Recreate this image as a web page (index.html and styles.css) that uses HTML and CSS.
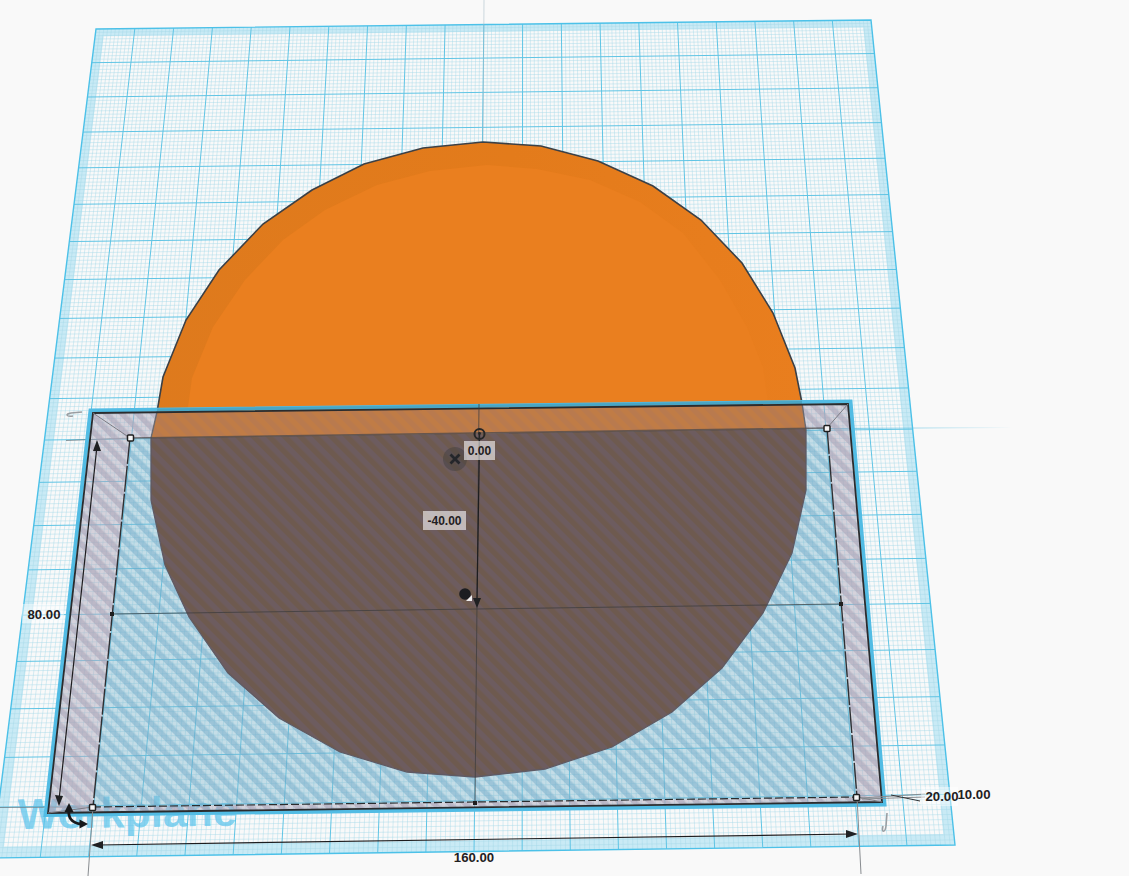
FILE: index.html
```html
<!DOCTYPE html>
<html lang="en">
<head>
<meta charset="utf-8">
<title>Workplane</title>
<link rel="stylesheet" href="styles.css">
</head>
<body>
<main class="viewport">
<svg class="scene" viewBox="0 0 1129 876" width="1129" height="876" xmlns="http://www.w3.org/2000/svg">
  <defs>
    <pattern id="hatch-wall" width="11" height="11" patternUnits="userSpaceOnUse" patternTransform="rotate(-45)">
      <rect class="hw-a" width="11" height="11"/><rect class="hw-b" width="5.5" height="11"/>
    </pattern>
    <pattern id="hatch-floor" width="11" height="11" patternUnits="userSpaceOnUse" patternTransform="rotate(-45)">
      <rect class="hf-a" width="11" height="11"/><rect class="hf-b" width="5.5" height="11"/>
    </pattern>
    <pattern id="hatch-orange" width="11" height="11" patternUnits="userSpaceOnUse" patternTransform="rotate(-45)">
      <rect class="ho-a" width="11" height="11"/><rect class="ho-b" width="5.5" height="11"/>
    </pattern>
    <pattern id="hatch-brown" width="11" height="11" patternUnits="userSpaceOnUse" patternTransform="rotate(-45)">
      <rect class="hb-a" width="11" height="11"/><rect class="hb-b" width="5.5" height="11"/>
    </pattern>
    <linearGradient id="rim" x1="0" x2="1" y1="0" y2="0">
      <stop offset="0" class="rim-l"/><stop offset="0.55" class="rim-m"/><stop offset="1" class="rim-r"/>
    </linearGradient>
    <linearGradient id="fade-right" gradientUnits="userSpaceOnUse" x1="827" y1="0" x2="1012" y2="0">
      <stop offset="0" class="fade-a"/><stop offset="1" class="fade-b"/>
    </linearGradient>
    <polygon id="disc" points="483,142 541,146 598,161 653,186 701,220 742,263 773,313 795,368 802,403 806,430 806,490 792,553 763,613 722,668 672,712 612,747 545,769 475,777 407,772 340,752 279,718 228,673 189,617 165,565 151,500 151,438 157,412 163,377 186,320 219,270 263,224 312,190 364,164 423,148"/>
    <clipPath id="clip-above"><polygon points="0,414 1129,400.6 1129,0 0,0"/></clipPath>
    <clipPath id="clip-wall"><polygon points="0,414 1129,400.6 1129,424 0,440.2"/></clipPath>
    <clipPath id="clip-upper"><polygon points="0,440.2 1129,424 1129,0 0,0"/></clipPath>
    <clipPath id="clip-floor"><polygon points="0,440.2 1129,424 1129,876 0,876"/></clipPath>
  </defs>

  <!-- workplane -->
  <path id="wp-band" class="wp-band"/>
  <path id="wp-minor" class="wp-minor"/>
  <path id="wp-major" class="wp-major"/>
  <polygon class="wp-edge" points="96,29 871,20 955,845 -8,858"/>
  <text class="wp-title" x="18" y="829" transform="rotate(-0.9 18 829)">Workplane</text>

  <!-- faint centre axis -->
  <line class="axis-faint" x1="484" y1="0" x2="483" y2="142"/>
  <line class="axis-blue" x1="827" y1="428.5" x2="1012" y2="427.5"/>
  <line class="axis-grey" x1="66" y1="440.5" x2="130" y2="438"/>
  <line class="axis-grey" x1="0" y1="807.5" x2="93" y2="807"/>

  <!-- hole box, walls and floor -->
  <path class="box-wall" fill-rule="evenodd" d="M93 413 848 404 882 802 48 813Z M130 438 827 428 857 797 93 807Z"/>
  <polygon class="box-floor" points="130,438 827,428 857,797 93,807"/>

  <!-- half disc -->
  <g clip-path="url(#clip-upper)">
    <use href="#disc" class="disc-rim"/>
    <polygon class="disc-top" points="187,414 192,378 213,327 245,280 283,240 325,210 377,185 430,171 487,165 537,169 590,180 640,202 683,233 720,280 747,327 763,367 768,402 770,432 187,440"/>
  </g>
  <use href="#disc" class="disc-hatch-orange" clip-path="url(#clip-wall)"/>
  <use href="#disc" class="disc-brown" clip-path="url(#clip-floor)"/>
  <use href="#disc" class="disc-line" clip-path="url(#clip-above)"/>
  <use href="#disc" class="disc-line-wall" clip-path="url(#clip-wall)"/>
  <use href="#disc" class="disc-line-floor" clip-path="url(#clip-floor)"/>

  <!-- selection outline -->
  <polygon class="sel-blue" points="90.5,410.5 850.5,401.5 884.5,804.5 45.5,815"/>
  <line class="sel-teal" x1="157" y1="410" x2="802" y2="402.4"/>
  <polygon class="sel-black" points="93,413 848,404 882,802 48,813"/>

  <!-- bounding frame -->
  <line class="frame-top" x1="130" y1="438" x2="827" y2="428"/>
  <line class="frame-side" x1="130" y1="438" x2="93" y2="807"/>
  <line class="frame-side" x1="827" y1="428" x2="857" y2="797"/>
  <line class="frame-dash" x1="93" y1="807" x2="857" y2="797"/>
  <line class="frame-diag" x1="93" y1="413" x2="130" y2="438"/>
  <line class="frame-diag" x1="848" y1="404" x2="827" y2="428"/>
  <line class="frame-diag" x1="48" y1="813" x2="93" y2="807"/>
  <line class="frame-diag" x1="882" y1="802" x2="857" y2="797"/>
  <line class="frame-mid" x1="112" y1="614" x2="841" y2="604"/>
  <line class="frame-mid" x1="479" y1="404" x2="475" y2="803"/>

  <rect class="dot" x="110" y="612" width="4" height="4"/>
  <rect class="dot" x="839" y="602" width="4" height="4"/>
  <rect class="dot" x="473" y="801" width="4" height="4"/>

  <!-- dimensions -->
  <line class="dim" x1="97" y1="446" x2="59" y2="800"/>
  <polygon class="dim-head" points="97,440 93,451 101,451"/>
  <polygon class="dim-head" points="59,806 55,795 63,796"/>
  <line class="dim" x1="98" y1="845" x2="852" y2="834"/>
  <polygon class="dim-head" points="91,845 103,841 103,849"/>
  <polygon class="dim-head" points="858,834 846,830 846,838"/>
  <line class="dim-ext" x1="93" y1="807" x2="88" y2="876"/>
  <line class="dim-ext" x1="857" y1="797" x2="861" y2="874"/>
  <line class="dim-ext" x1="861" y1="798" x2="925" y2="794"/>
  <line class="dim-ext" x1="862" y1="799" x2="925" y2="797"/>
  <line class="dim-near" x1="891" y1="795" x2="920" y2="801"/>
  <line class="dim" x1="479.5" y1="440" x2="477" y2="600"/>
  <polygon class="dim-head" points="477,608 473,598 481,598"/>

  <!-- handles -->
  <rect class="handle" x="127.5" y="435" width="6" height="6" rx="1"/>
  <rect class="handle" x="824" y="425.5" width="6" height="6" rx="1"/>
  <rect class="handle" x="853.5" y="794.5" width="6" height="6" rx="1"/>
  <rect class="handle" x="89.5" y="804.5" width="6" height="6" rx="1"/>

  <!-- centre mark, close button, grip -->
  <circle class="centre-ring" cx="479.5" cy="434" r="5"/>
  <line class="centre-tick" x1="479.5" y1="434" x2="479.5" y2="439"/>
  <circle class="centre-pip" cx="479.5" cy="433.5" r="1.4"/>
  <circle class="close-bg" cx="455" cy="459" r="12"/>
  <path class="close-x" d="M450.5 454.5 459.5 463.5M459.5 454.5 450.5 463.5"/>
  <circle class="grip" cx="465" cy="594" r="5.8"/>
  <polygon class="grip-tip" points="472,595 472,601 466,601"/>

  <!-- rotate arrows -->
  <path class="rot-bold" d="M69 810C68 817 71 823 81 824"/>
  <polygon class="rot-bold-head" points="69,803 64.5,812 73.5,812"/>
  <polygon class="rot-bold-head" points="88,824 79.5,819.5 79.5,828.5"/>
  <path class="rot-grey" d="M82 412 71 413C65 414 66 417 73 416"/>
  <path class="rot-grey" d="M887 813 886 826C885 833 881 833 883 826"/>

  <!-- labels -->
  <rect class="label-bg" x="423" y="511" width="43" height="19"/>
  <text class="label" x="444.5" y="524.5">-40.00</text>
  <rect class="label-bg" x="464" y="441" width="31" height="19"/>
  <text class="label" x="479.5" y="454.5">0.00</text>
  <rect class="label-soft" x="22" y="604" width="42" height="19"/>
  <text class="label label-lg" x="44" y="619">80.00</text>
  <text class="label label-lg" x="474" y="862">160.00</text>
  <text class="label label-lg" x="974" y="799">10.00</text>
  <rect class="label-soft" x="921" y="787" width="37" height="19"/>
  <text class="label label-lg" x="942" y="801">20.00</text>
</svg>
</main>
<script src="grid.js"></script>
</body>
</html>
```
FILE: styles.css
```css
html, body { margin: 0; padding: 0; background: #f9f9f9; }
body { width: 1129px; height: 876px; overflow: hidden; }
.viewport { display: block; width: 1129px; height: 876px; }
.scene { display: block; }

.wp-band { fill: #8fd6f0; fill-opacity: .45; fill-rule: evenodd; stroke: none; }
.wp-minor { fill: none; stroke: #a4d8e9; stroke-width: .8; stroke-opacity: .56; }
.wp-major { fill: none; stroke: #5fc4e4; stroke-width: 1; }
.wp-edge { fill: none; stroke: #4cc1e8; stroke-width: 1.4; }
.wp-title { font: bold 43px "Liberation Sans", Arial, sans-serif; fill: #5cc4ec; fill-opacity: .72; }

.axis-faint { stroke: #9fb8c4; stroke-width: 1; stroke-opacity: .5; }
.axis-blue { stroke: url(#fade-right); stroke-width: 1; }
.axis-grey { stroke: #6f7a80; stroke-width: 1; stroke-opacity: .75; }
.fade-a { stop-color: #5cbfe0; stop-opacity: 1; }
.fade-b { stop-color: #5cbfe0; stop-opacity: 0; }

.box-wall { fill: url(#hatch-wall); }
.box-floor { fill: url(#hatch-floor); }
.hw-a { fill: rgba(178, 172, 190, .5); }
.hw-b { fill: rgba(168, 162, 182, .56); }
.hf-a { fill: rgba(122, 180, 206, .42); }
.hf-b { fill: rgba(112, 170, 200, .48); }
.ho-a { fill: #c07c46; }
.ho-b { fill: #b97a4e; }
.hb-a { fill: #6d5c5f; }
.hb-b { fill: #6e5a4f; }

.disc-rim { fill: url(#rim); }
.disc-top { fill: #ea7f1f; }
.rim-l { stop-color: #de7a1d; }
.rim-m { stop-color: #e37b1b; }
.rim-r { stop-color: #e97e1e; }
.disc-hatch-orange { fill: url(#hatch-orange); }
.disc-brown { fill: url(#hatch-brown); }
.disc-line { fill: none; stroke: #3c4046; stroke-width: 1.6; }
.disc-line-wall { fill: none; stroke: #6b6a70; stroke-width: 1.4; }
.disc-line-floor { fill: none; stroke: #5f5a64; stroke-width: 1.3; }

.sel-blue { fill: none; stroke: #52bce4; stroke-width: 4; }
.sel-teal { stroke: #4aa6c4; stroke-width: 3; }
.sel-black { fill: none; stroke: #2a2c2e; stroke-width: 1.8; }

.frame-top { stroke: #4c4a4c; stroke-width: 1.6; stroke-opacity: .75; }
.frame-side { stroke: #2e3033; stroke-width: 1.4; stroke-dasharray: 26 2; }
.frame-dash { stroke: #2a2c2e; stroke-width: 1.2; stroke-dasharray: 8 3; }
.frame-diag { stroke: #7c7c84; stroke-width: 1; }
.frame-mid { stroke: #3b3b3d; stroke-width: 1; stroke-opacity: .72; }
.dot { fill: #1f1f1f; }

.dim { stroke: #1d1d1f; stroke-width: 1.2; }
.dim-head { fill: #1f2022; }
.dim-ext { stroke: #888c90; stroke-width: 1; }
.dim-near { stroke: #303234; stroke-width: 1; }

.handle { fill: #f5f5f5; stroke: #1f1f1f; stroke-width: 1.5; }

.centre-ring { fill: none; stroke: #262626; stroke-width: 2; }
.centre-tick { stroke: #262626; stroke-width: 1.4; }
.centre-pip { fill: #262626; }
.close-bg { fill: #3c3c3c; fill-opacity: .42; }
.close-x { fill: none; stroke: #24262a; stroke-width: 2.8; }
.grip { fill: #1c1d20; }
.grip-tip { fill: #eeeeee; }

.rot-bold { fill: none; stroke: #17181a; stroke-width: 2.8; }
.rot-bold-head { fill: #17181a; }
.rot-grey { fill: none; stroke: #9a9ea2; stroke-width: 1.6; }

.label-bg { fill: #ffffff; fill-opacity: .58; }
.label-soft { fill: #ffffff; fill-opacity: .45; }
.label { font: bold 12px "Liberation Sans", Arial, sans-serif; fill: #1f2022; text-anchor: middle; }
.label-lg { font-size: 13.2px; }
```
FILE: grid.js
```js
// Draws the workplane grid: 200 x 200 units seen in perspective.
(function () {
  var q = [[96, 29], [871, 20], [955, 845], [-8, 858]];
  var dx1 = q[1][0] - q[2][0], dx2 = q[3][0] - q[2][0], sx = q[0][0] - q[1][0] + q[2][0] - q[3][0];
  var dy1 = q[1][1] - q[2][1], dy2 = q[3][1] - q[2][1], sy = q[0][1] - q[1][1] + q[2][1] - q[3][1];
  var den = dx1 * dy2 - dx2 * dy1;
  var g = (sx * dy2 - dx2 * sy) / den, h = (dx1 * sy - sx * dy1) / den;
  var a = q[1][0] - q[0][0] + g * q[1][0], b = q[3][0] - q[0][0] + h * q[3][0], c = q[0][0];
  var d = q[1][1] - q[0][1] + g * q[1][1], e = q[3][1] - q[0][1] + h * q[3][1], f = q[0][1];

  function pt(u, v) {
    var w = g * u + h * v + 1;
    return ((a * u + b * v + c) / w).toFixed(2) + ' ' + ((d * u + e * v + f) / w).toFixed(2);
  }
  function seg(u0, v0, u1, v1) { return 'M' + pt(u0, v0) + 'L' + pt(u1, v1); }
  function ring(m) {
    return 'M' + pt(m, m) + 'L' + pt(1 - m, m) + 'L' + pt(1 - m, 1 - m) + 'L' + pt(m, 1 - m) + 'Z';
  }

  var minor = '', major = '', i, t;
  for (i = 1; i < 200; i++) {
    t = i / 200;
    if (i % 10 === 0) {
      major += seg(t, 0, t, 1) + seg(0, t, 1, t);
    } else {
      minor += seg(t, 0, t, 1) + seg(0, t, 1, t);
    }
  }
  document.getElementById('wp-minor').setAttribute('d', minor);
  document.getElementById('wp-major').setAttribute('d', major);
  document.getElementById('wp-band').setAttribute('d', ring(0) + ring(0.011));
})();
```
